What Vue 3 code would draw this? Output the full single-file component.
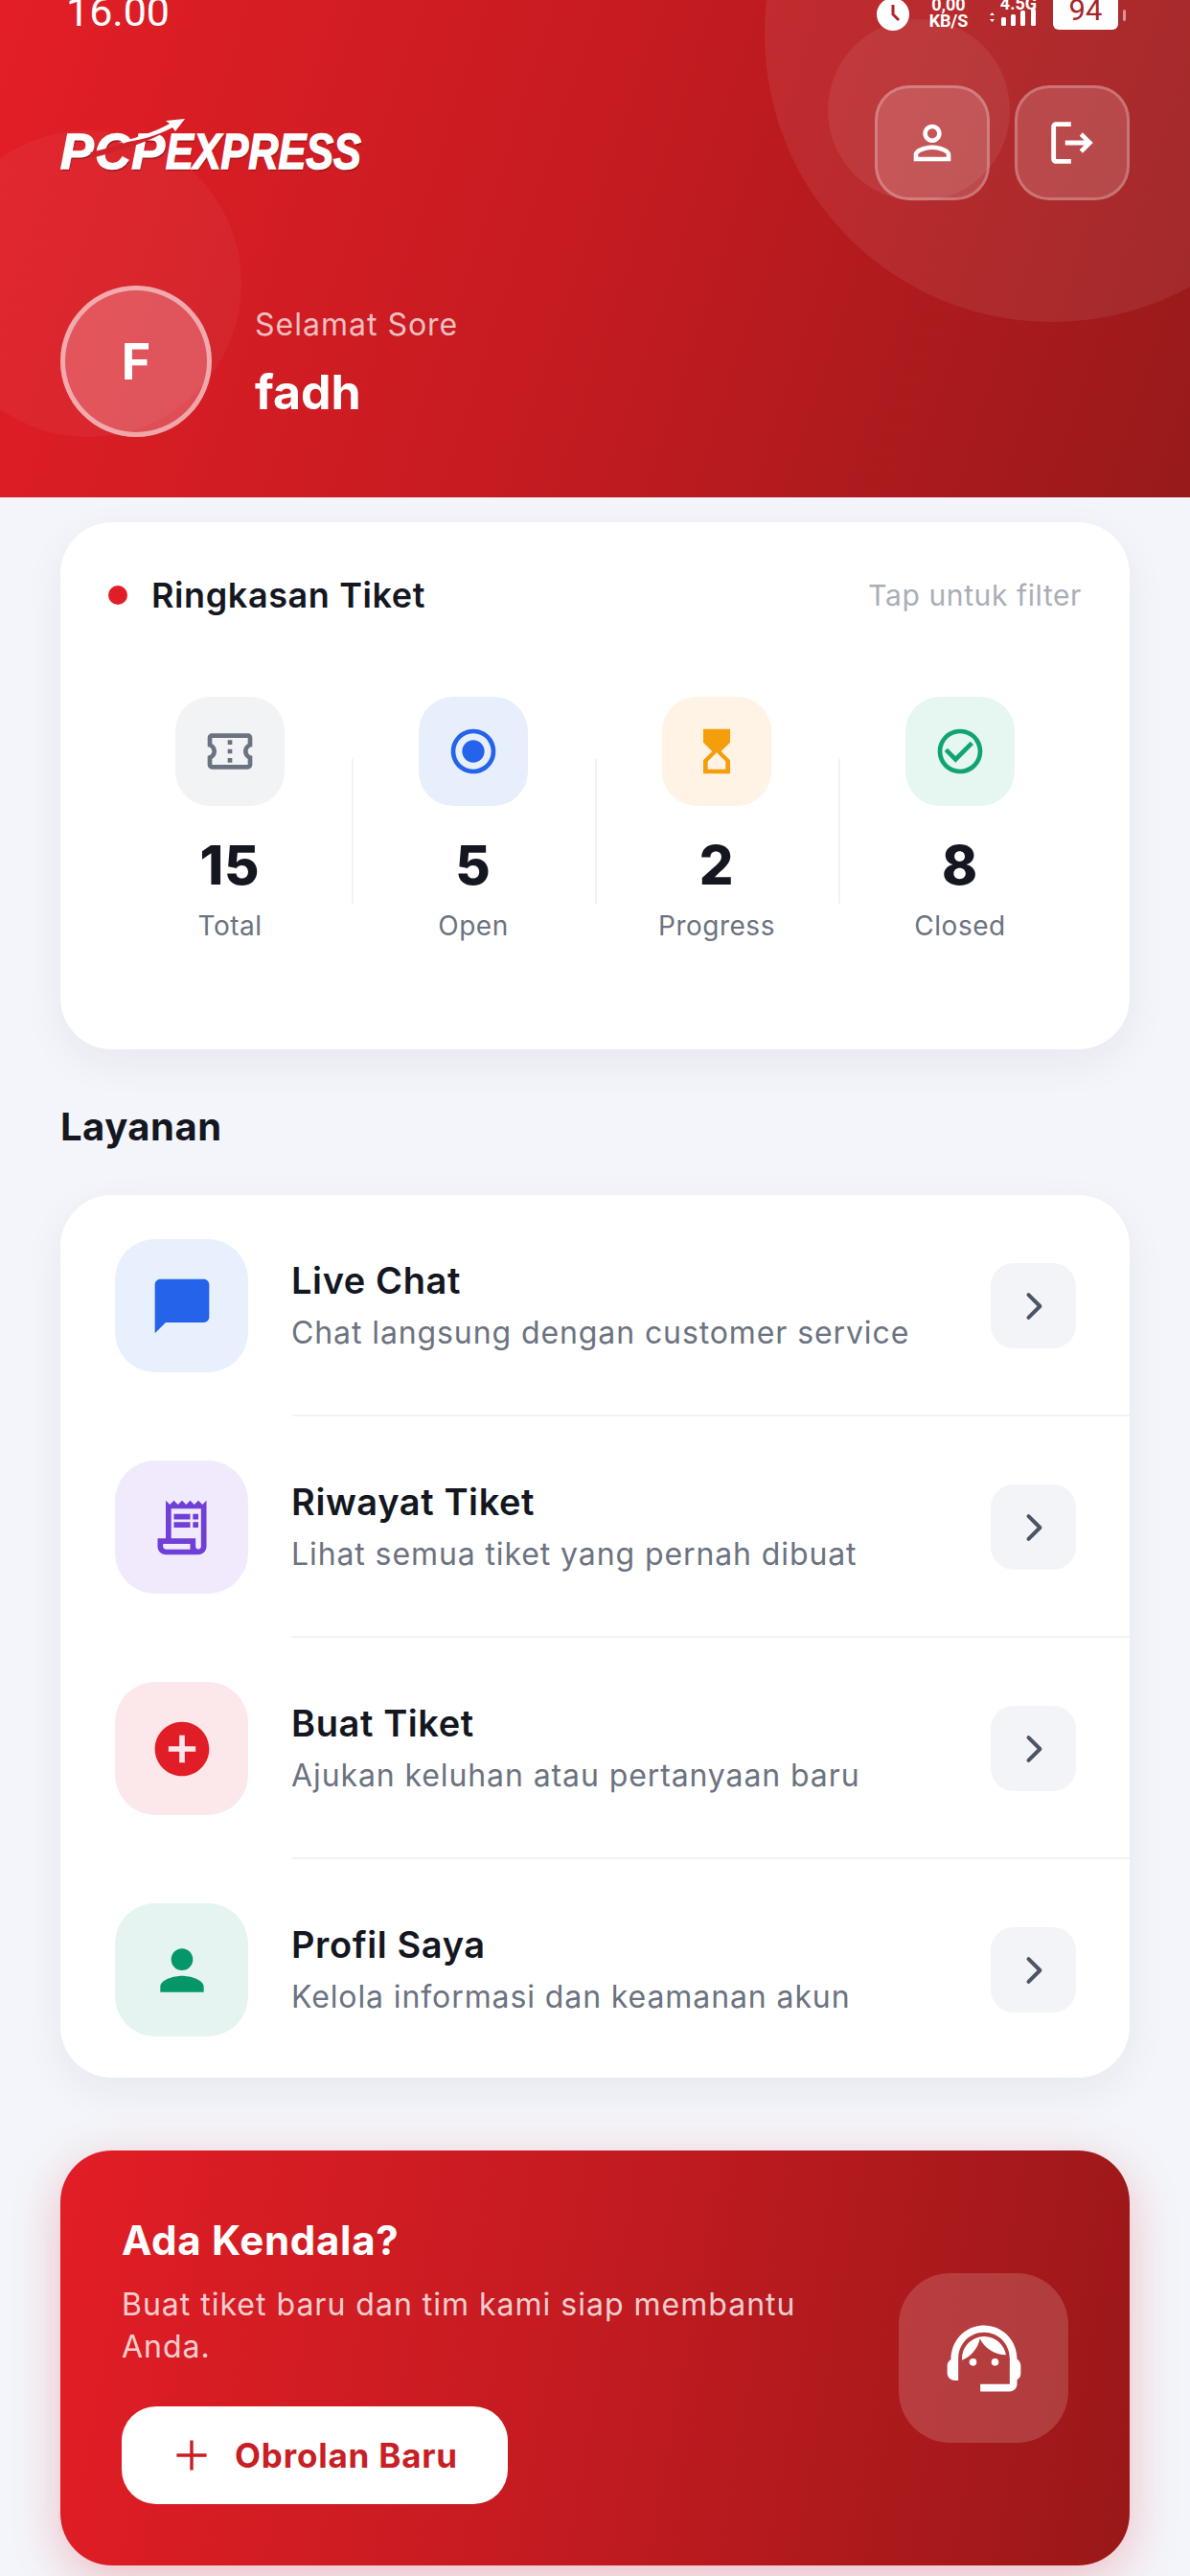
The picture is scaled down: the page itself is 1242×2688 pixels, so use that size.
<template>
  <div class="page">
    <header class="hero">
      <span class="blob blob-big"></span>
      <span class="blob blob-small"></span>
      <span class="blob blob-left"></span>

      <div class="status">
        <span class="status-time">16.00</span>
        <div class="status-right">
          <svg class="status-clock" viewBox="0 0 34 34">
            <circle cx="17" cy="17" r="17" fill="#fff" />
            <path d="M17 7v10l6 6" fill="none" stroke="#b32228" stroke-width="3" />
          </svg>
          <div class="status-speed"><span>0,00</span><span>KB/S</span></div>
          <div class="status-net">
            <span class="status-gen">4.5G</span>
            <svg viewBox="0 0 50 18" width="50" height="18">
              <path d="M1 7l2.500-3 2.500 3zM1 11l2.500 3 2.500-3z" fill="#fff" />
              <rect x="13" y="9" width="5" height="9" rx="1.500" fill="#fff" />
              <rect x="23" y="6" width="5" height="12" rx="1.500" fill="#fff" />
              <rect x="33" y="2" width="5" height="16" rx="1.500" fill="#fff" />
              <rect x="44" y="0" width="5" height="18" rx="1.500" fill="#fff" />
            </svg>
          </div>
          <div class="status-battery">94</div>
          <span class="status-nub"></span>
        </div>
      </div>

      <div class="hero-top">
        <div class="logo">
          <span class="logo-text"><span class="logo-pcp">PCP</span><span class="logo-exp">EXPRESS</span></span>
          <svg class="logo-swoosh" viewBox="0 0 110 50" width="110" height="50">
            <path d="M2 42 C34 34 60 26 84 12" fill="none" stroke="#d0222a" stroke-width="6" />
            <path d="M30 29 C52 23 70 17 84 9 L80 6 L100 4 L90 17 L87 13 C70 22 52 27 30 29Z" fill="#fff" />
          </svg>
        </div>
        <div class="hero-actions">
          <button class="glass-btn">
            <svg viewBox="0 0 24 24" width="58" height="58"><path :d="icons.personOutline" fill="#fff" /></svg>
          </button>
          <button class="glass-btn">
            <svg viewBox="0 0 24 24" width="58" height="58"><path :d="icons.logout" fill="#fff" /></svg>
          </button>
        </div>
      </div>

      <div class="user">
        <div class="avatar">F</div>
        <div>
          <div class="greet">Selamat Sore</div>
          <div class="name">fadh</div>
        </div>
      </div>
    </header>

    <main class="content">
      <section class="card summary">
        <div class="summary-head">
          <span class="dot"></span>
          <h3>Ringkasan Tiket</h3>
          <span class="hint">Tap untuk filter</span>
        </div>
        <div class="stats">
          <div v-for="stat in stats" :key="stat.label" class="stat">
            <div class="stat-icon" :class="stat.tone">
              <svg viewBox="0 0 24 24" width="56" height="56"><path :d="stat.icon" fill="currentColor" /></svg>
            </div>
            <div class="stat-num">{{ stat.value }}</div>
            <div class="stat-label">{{ stat.label }}</div>
          </div>
        </div>
      </section>

      <h2 class="section-title">Layanan</h2>

      <section class="card services">
        <div v-for="item in services" :key="item.title" class="service">
          <div class="service-icon" :class="item.tone">
            <svg viewBox="0 0 24 24" width="68" height="68"><path :d="item.icon" fill="currentColor" /></svg>
          </div>
          <div class="service-text">
            <div class="service-title">{{ item.title }}</div>
            <div class="service-sub">{{ item.sub }}</div>
          </div>
          <div class="chevron">
            <svg viewBox="0 0 24 24" width="44" height="44"><path d="M9 5.500l6.500 6.500L9 18.500" fill="none" stroke="#4b5563" stroke-width="2.200" stroke-linecap="round" stroke-linejoin="round" /></svg>
          </div>
        </div>
      </section>

      <section class="help">
        <div class="help-text">
          <h3>Ada Kendala?</h3>
          <p>Buat tiket baru dan tim kami siap membantu Anda.</p>
          <button class="help-btn">
            <svg viewBox="0 0 24 24" width="34" height="34"><path d="M12 1v22M1 12h22" fill="none" stroke="#c81e26" stroke-width="2.400" /></svg>
            Obrolan Baru
          </button>
        </div>
        <div class="help-icon">
          <svg viewBox="0 0 24 24" width="92" height="92"><path :d="icons.agent" fill="#fff" /></svg>
        </div>
      </section>
    </main>
  </div>
</template>

<script setup>
const icons = {
  personOutline: 'M12 5.900c1.160 0 2.100.940 2.100 2.100s-.940 2.100-2.100 2.100S9.900 9.160 9.900 8s.940-2.100 2.100-2.100m0 9c2.970 0 6.100 1.460 6.100 2.100v1.100H5.900V17c0-.640 3.130-2.100 6.100-2.100M12 4C9.790 4 8 5.790 8 8s1.790 4 4 4 4-1.790 4-4-1.790-4-4-4zm0 9c-2.670 0-8 1.340-8 4v3h16v-3c0-2.660-5.330-4-8-4z',
  logout: 'M16.500 7.600 15.200 9l2 2H9v2h8.200l-2 2 1.300 1.400L21 12zM5 5h6.500V3H5c-1.100 0-2 .900-2 2v14c0 1.100.900 2 2 2h6.500v-2H5V5z',
  agent: 'M21 12.220C21 6.730 16.740 3 12 3c-4.690 0-9 3.650-9 9.280-.600.340-1 .980-1 1.720v2c0 1.100.900 2 2 2h1v-6.100c0-3.870 3.130-7 7-7s7 3.130 7 7V19h-8v2h8c1.100 0 2-.900 2-2v-1.220c.590-.310 1-.920 1-1.610v-2.300c0-.670-.410-1.280-1-1.650zM9 12a1 1 0 1 0 0 2 1 1 0 0 0 0-2zM15 12a1 1 0 1 0 0 2 1 1 0 0 0 0-2zM18 11.030C17.520 8.180 15.040 6 12.050 6c-3.030 0-6.290 2.510-6.030 6.450 2.470-1.010 4.330-3.210 4.860-5.890 1.310 2.630 4 4.440 7.120 4.470z'
}

const stats = [
  {
    label: 'Total',
    value: 15,
    tone: 'gray',
    icon: 'M22 10V6c0-1.110-.900-2-2-2H4c-1.100 0-1.990.890-1.990 2v4c1.100 0 1.990.900 1.990 2s-.890 2-2 2v4c0 1.100.900 2 2 2h16c1.100 0 2-.900 2-2v-4c-1.100 0-2-.900-2-2s.900-2 2-2zm-2-1.460c-1.190.690-2 1.990-2 3.460s.810 2.770 2 3.460V18H4v-2.540c1.190-.690 2-1.990 2-3.460 0-1.480-.800-2.770-1.990-3.460L4 6h16v2.540zM11 15h2v2h-2zm0-4h2v2h-2zm0-4h2v2h-2z'
  },
  {
    label: 'Open',
    value: 5,
    tone: 'blue',
    icon: 'M12 7c-2.760 0-5 2.240-5 5s2.240 5 5 5 5-2.240 5-5-2.240-5-5-5zm0-5C6.480 2 2 6.480 2 12s4.480 10 10 10 10-4.480 10-10S17.520 2 12 2zm0 18c-4.420 0-8-3.580-8-8s3.580-8 8-8 8 3.580 8 8-3.580 8-8 8z'
  },
  {
    label: 'Progress',
    value: 2,
    tone: 'amber',
    icon: 'M6 2v6h.010L6 8.010 10 12l-4 4 .010.010H6V22h12v-5.990h-.010L18 16l-4-4 4-3.990-.010-.010H18V2H6zm10 14.500V20H8v-3.500l4-4 4 4z'
  },
  {
    label: 'Closed',
    value: 8,
    tone: 'green',
    icon: 'M16.590 7.580 10 14.170l-3.590-3.580L5 12l5 5 8-8zM12 2C6.480 2 2 6.480 2 12s4.480 10 10 10 10-4.480 10-10S17.520 2 12 2zm0 18c-4.420 0-8-3.580-8-8s3.580-8 8-8 8 3.580 8 8-3.580 8-8 8z'
  }
]

const services = [
  {
    title: 'Live Chat',
    sub: 'Chat langsung dengan customer service',
    tone: 'blue',
    icon: 'M20 2H4c-1.100 0-2 .900-2 2v18l4-4h14c1.100 0 2-.900 2-2V4c0-1.100-.900-2-2-2z'
  },
  {
    title: 'Riwayat Tiket',
    sub: 'Lihat semua tiket yang pernah dibuat',
    tone: 'purple',
    icon: 'M19.500 3.500 18 2l-1.500 1.500L15 2l-1.500 1.500L12 2l-1.500 1.500L9 2 7.500 3.500 6 2v14H3v3c0 1.660 1.340 3 3 3h12c1.660 0 3-1.340 3-3V2l-1.500 1.500zM15 20H6c-.550 0-1-.450-1-1v-1h10v2zm4-1c0 .550-.450 1-1 1s-1-.450-1-1v-3H8V5h11v14zM9 7h6v2H9zm7 0h2v2h-2zm-7 3h6v2H9zm7 0h2v2h-2z'
  },
  {
    title: 'Buat Tiket',
    sub: 'Ajukan keluhan atau pertanyaan baru',
    tone: 'red',
    icon: 'M12 2C6.480 2 2 6.480 2 12s4.480 10 10 10 10-4.480 10-10S17.520 2 12 2zm5 11h-4v4h-2v-4H7v-2h4V7h2v4h4v2z'
  },
  {
    title: 'Profil Saya',
    sub: 'Kelola informasi dan keamanan akun',
    tone: 'teal',
    icon: 'M12 12c2.210 0 4-1.790 4-4s-1.790-4-4-4-4 1.790-4 4 1.790 4 4 4zm0 2c-2.670 0-8 1.340-8 4v2h16v-2c0-2.660-5.330-4-8-4z'
  }
]
</script>

<style scoped>
.page {
  width: 1242px;
  height: 2688px;
  overflow: hidden;
  background: #f3f5fa;
  font-family: Inter, "Noto Sans", sans-serif;
  color: #14171f;
}

/* header */
.hero {
  position: relative;
  height: 519px;
  box-sizing: border-box;
  overflow: hidden;
  padding: 0 63px;
  background: linear-gradient(108deg, #e31e26 0%, #c41b21 50%, #981a1a 100%);
}
.blob {
  position: absolute;
  border-radius: 50%;
  background: rgba(255, 255, 255, 0.07);
}
.blob-big {
  width: 600px;
  height: 600px;
  top: -264px;
  right: -156px;
}
.blob-small {
  width: 190px;
  height: 190px;
  top: 20px;
  left: 864px;
}
.blob-left {
  width: 320px;
  height: 320px;
  top: 136px;
  left: -68px;
  background: rgba(255, 255, 255, 0.045);
}

.status {
  position: relative;
  height: 30px;
  display: flex;
  justify-content: space-between;
  align-items: flex-end;
  color: #fff;
  font-family: Roboto, sans-serif;
}
.status-time {
  font-size: 43px;
  line-height: 30px;
  margin: 0 0 3px 6px;
  white-space: nowrap;
}
.status-right {
  display: flex;
  align-items: flex-end;
  margin-right: 4px;
}
.status-clock {
  width: 34px;
  height: 34px;
  margin-bottom: -2px;
}
.status-speed {
  display: flex;
  flex-direction: column;
  align-items: center;
  width: 46px;
  margin-left: 18px;
  font-size: 18px;
  font-weight: 700;
  line-height: 17px;
}
.status-net {
  display: flex;
  flex-direction: column;
  align-items: flex-end;
  width: 50px;
  margin: 0 0 3px 19px;
}
.status-gen {
  font-size: 18px;
  font-weight: 700;
  line-height: 10px;
}
.status-battery {
  width: 68px;
  height: 32px;
  margin-left: 17px;
  margin-bottom: -1px;
  border-radius: 0 0 6px 6px;
  background: #fff;
  color: #a3252a;
  font-size: 31px;
  line-height: 24px;
  text-align: center;
}
.status-nub {
  width: 3px;
  height: 12px;
  margin: 0 0 8px 5px;
  border-radius: 2px;
  background: rgba(255, 255, 255, 0.5);
}

.hero-top {
  position: relative;
  margin-top: 59px;
  display: flex;
  justify-content: space-between;
  align-items: center;
}
.logo {
  position: relative;
  width: 320px;
  height: 52px;
  margin-top: 18px;
}
.logo-text {
  display: flex;
  align-items: baseline;
  color: #fff;
  font-family: "Liberation Sans", sans-serif;
  font-weight: 700;
  font-style: italic;
  font-size: 52px;
  line-height: 52px;
  white-space: nowrap;
  -webkit-text-stroke: 1.5px #fff;
  text-shadow: 1px 2px 1px #8f1519;
}
.logo-pcp {
  width: 120px;
  letter-spacing: 1px;
}
.logo-exp {
  display: inline-block;
  transform: scaleX(0.83);
  transform-origin: left center;
}
.logo-swoosh {
  position: absolute;
  left: 30px;
  top: -12px;
}
.hero-actions {
  display: flex;
  gap: 26px;
}
.glass-btn {
  width: 120px;
  height: 120px;
  box-sizing: border-box;
  padding: 0;
  display: flex;
  align-items: center;
  justify-content: center;
  border: 3px solid rgba(255, 255, 255, 0.24);
  border-radius: 36px;
  background: rgba(255, 255, 255, 0.15);
}

.user {
  position: relative;
  margin-top: 89px;
  display: flex;
  align-items: center;
  gap: 45px;
}
.avatar {
  width: 158px;
  height: 158px;
  box-sizing: border-box;
  display: flex;
  align-items: center;
  justify-content: center;
  border: 5px solid rgba(255, 255, 255, 0.5);
  border-radius: 50%;
  background: rgba(255, 255, 255, 0.22);
  color: #fff;
  font-size: 52px;
  font-weight: 700;
}
.greet {
  margin-top: -7px;
  font-size: 32px;
  line-height: 40px;
  letter-spacing: 1px;
  color: rgba(255, 255, 255, 0.72);
}
.name {
  margin-top: 30px;
  font-size: 50px;
  line-height: 40px;
  font-weight: 700;
  color: #fff;
}

/* content */
.content {
  padding: 26px 63px 0;
}
.card {
  background: #fff;
  border-radius: 54px;
  box-shadow: 0 14px 44px rgba(30, 40, 80, 0.06);
}
.summary {
  height: 550px;
  box-sizing: border-box;
  padding: 54px 50px 0;
}
.summary-head {
  display: flex;
  align-items: center;
  height: 44px;
}
.dot {
  width: 20px;
  height: 20px;
  border-radius: 50%;
  background: #e11d27;
}
.summary-head h3 {
  margin: 0 0 0 25px;
  font-size: 36px;
  line-height: 44px;
  font-weight: 600;
  letter-spacing: 0.6px;
}
.hint {
  margin-left: auto;
  font-size: 30px;
  letter-spacing: 0.6px;
  color: #a9aeb6;
}
.stats {
  margin-top: 84px;
  display: grid;
  grid-template-columns: repeat(4, 1fr);
}
.stat {
  position: relative;
  display: flex;
  flex-direction: column;
  align-items: center;
}
.stat + .stat::before {
  content: "";
  position: absolute;
  left: 0;
  top: 65px;
  height: 151px;
  width: 2px;
  background: #f1f2f5;
}
.stat-icon {
  width: 114px;
  height: 114px;
  display: flex;
  align-items: center;
  justify-content: center;
  border-radius: 36px;
}
.stat-icon.gray { background: #f1f3f5; color: #6b7280; }
.stat-icon.blue { background: #e8effc; color: #2563eb; }
.stat-icon.amber { background: #fef3e5; color: #f59e0b; }
.stat-icon.green { background: #e6f7f1; color: #10a474; }
.stat-num {
  margin-top: 32px;
  font-size: 56px;
  line-height: 60px;
  font-weight: 800;
  letter-spacing: 1px;
}
.stat-label {
  margin-top: 15px;
  font-size: 28px;
  line-height: 36px;
  letter-spacing: 0.5px;
  color: #6b7280;
}

.section-title {
  margin: 55px 0 0;
  font-size: 40px;
  line-height: 52px;
  font-weight: 700;
  letter-spacing: 0.5px;
}
.services {
  margin-top: 45px;
  overflow: hidden;
}
.service {
  position: relative;
  height: 231px;
  box-sizing: border-box;
  padding-left: 57px;
  padding-right: 56px;
  display: flex;
  align-items: center;
}
.service:last-child {
  height: 228px;
  padding-top: 3px;
}
.service:not(:last-child)::after {
  content: "";
  position: absolute;
  left: 242px;
  right: 0;
  bottom: 0;
  height: 2px;
  background: #f1f2f5;
}
.service-icon {
  flex: none;
  width: 139px;
  height: 139px;
  display: flex;
  align-items: center;
  justify-content: center;
  border-radius: 42px;
}
.service-icon.blue { background: #e8effd; color: #2563eb; }
.service-icon.purple { background: #f1eafc; color: #6f3fd6; }
.service-icon.red { background: #fce8ea; color: #e11d27; }
.service-icon.teal { background: #e5f4f0; color: #059669; }
.service-text {
  flex: 1;
  margin-left: 45px;
}
.service-title {
  font-size: 38px;
  line-height: 46px;
  font-weight: 600;
  letter-spacing: 0.6px;
}
.service-sub {
  margin-top: 10px;
  font-size: 32px;
  line-height: 44px;
  letter-spacing: 0.9px;
  color: #6b7280;
}
.chevron {
  flex: none;
  width: 89px;
  height: 89px;
  display: flex;
  align-items: center;
  justify-content: center;
  border-radius: 24px;
  background: #f3f4f8;
}

.help {
  margin-top: 76px;
  height: 433px;
  box-sizing: border-box;
  padding: 66px 64px 0;
  display: flex;
  justify-content: space-between;
  border-radius: 54px;
  background: linear-gradient(100deg, #e21d25 0%, #c21b21 50%, #9a1818 100%);
  box-shadow: 0 14px 50px rgba(225, 29, 39, 0.26);
  color: #fff;
}
.help-text {
  width: 740px;
}
.help-text h3 {
  margin: 0;
  font-size: 42px;
  line-height: 56px;
  font-weight: 700;
  letter-spacing: 0.7px;
}
.help-text p {
  margin: 17px 0 0;
  font-size: 32px;
  line-height: 44px;
  letter-spacing: 1px;
  color: rgba(255, 255, 255, 0.8);
}
.help-btn {
  margin-top: 40px;
  width: 403px;
  height: 102px;
  padding: 0 0 0 4px;
  display: flex;
  align-items: center;
  justify-content: center;
  gap: 28px;
  border: none;
  border-radius: 36px;
  background: #fff;
  color: #c81e26;
  font-family: inherit;
  font-size: 35px;
  font-weight: 700;
  letter-spacing: 0.8px;
}
.help-icon {
  flex: none;
  width: 177px;
  height: 177px;
  margin-top: 62px;
  display: flex;
  align-items: center;
  justify-content: center;
  border-radius: 54px;
  background: rgba(255, 255, 255, 0.16);
}
</style>

<style>
body {
  background: #f3f5fa;
}
</style>
